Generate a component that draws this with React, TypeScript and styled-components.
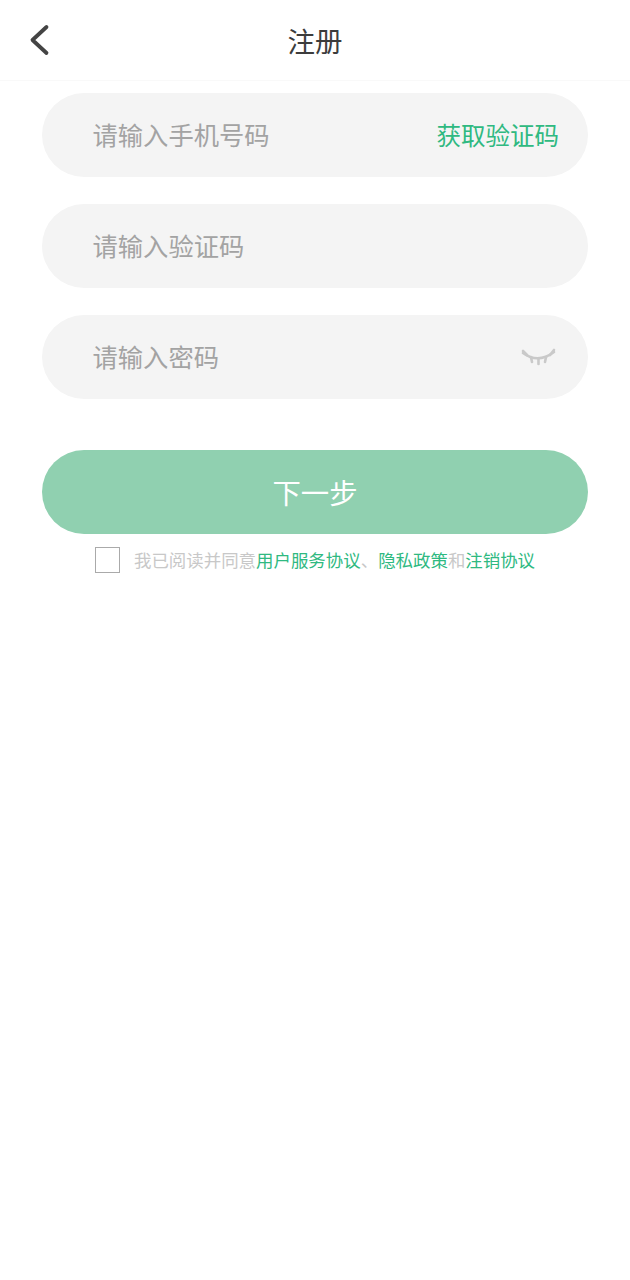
import React from 'react';
import styled, {createGlobalStyle} from 'styled-components';

const GlobalStyle = createGlobalStyle`
  html, body {
    margin: 0;
    padding: 0;
    background: #ffffff;
    font-family: "Noto Sans CJK SC", "Noto Sans", sans-serif;
  }
`;

const Page = styled.div`
  width: 630px;
  height: 1280px;
  display: flex;
  flex-direction: column;
  background: #ffffff;
`;

const Header = styled.header`
  position: relative;
  height: 81px;
  box-sizing: border-box;
  display: flex;
  align-items: center;
  justify-content: center;
  border-bottom: 1px solid #f9f9f9;
`;

const BackButton = styled.button`
  position: absolute;
  left: 28px;
  top: 24px;
  width: 24px;
  height: 32px;
  padding: 0;
  border: none;
  background: none;
`;

const Title = styled.h1`
  margin: 0;
  font-size: 27.5px;
  font-weight: 400;
  color: #3c3c3c;
`;

const Form = styled.div`
  display: flex;
  flex-direction: column;
  padding: 12px 42px 0;
`;

const Field = styled.div`
  height: 84px;
  box-sizing: border-box;
  margin-bottom: 27px;
  padding: 0 29px 2px 50.5px;
  display: flex;
  align-items: center;
  justify-content: space-between;
  background: #f4f4f4;
  border-radius: 42px;
`;

const Placeholder = styled.span`
  font-size: 25.3px;
  color: #a3a3a3;
`;

const CodeLink = styled.span`
  font-size: 24.5px;
  color: #2fb981;
`;

const EyeIcon = styled.svg`
  width: 36px;
  height: 20px;
  margin: 2px 3px 0 0;
`;

const NextButton = styled.button`
  height: 84px;
  margin-top: 24px;
  padding: 0 0 2px;
  border: none;
  border-radius: 42px;
  background: #90d0b0;
  color: #ffffff;
  font-family: inherit;
  font-size: 28.4px;
`;

const Agreement = styled.div`
  display: flex;
  align-items: flex-start;
  margin-top: 12px;
  padding-left: 53px;
`;

const CheckBox = styled.span`
  width: 25px;
  height: 26px;
  margin-top: 1px;
  box-sizing: border-box;
  border: 1px solid #aaaaaa;
  background: #ffffff;
`;

const AgreementText = styled.p`
  margin: 1px 0 0 14px;
  font-size: 17.45px;
  white-space: nowrap;
  color: #c8c8c8;
`;

const LinkText = styled.span`
  color: #2fb981;
`;

export default function App() {
  return (
    <Page>
      <GlobalStyle />
      <Header>
        <BackButton aria-label="返回">
          <svg width="24" height="32" viewBox="0 0 24 32" fill="none">
            <path d="M18.5 3 L4.5 16 L18.5 29" stroke="#444444" strokeWidth="3.8" strokeLinecap="round" strokeLinejoin="round" />
          </svg>
        </BackButton>
        <Title>注册</Title>
      </Header>
      <Form>
        <Field>
          <Placeholder>请输入手机号码</Placeholder>
          <CodeLink>获取验证码</CodeLink>
        </Field>
        <Field>
          <Placeholder>请输入验证码</Placeholder>
        </Field>
        <Field>
          <Placeholder>请输入密码</Placeholder>
          <EyeIcon viewBox="0 0 36 20" fill="none" stroke="#c9c9c9" strokeWidth="2.6" strokeLinecap="round">
            <path d="M3 6 Q18 17 34 5" />
            <path d="M3 4 L7 8" />
            <path d="M34 3 L30 8" />
            <path d="M11 10 L12 15" />
            <path d="M18.5 12 L18.5 17" />
            <path d="M26 10 L25 15" />
          </EyeIcon>
        </Field>
        <NextButton>下一步</NextButton>
        <Agreement>
          <CheckBox />
          <AgreementText>
            我已阅读并同意<LinkText>用户服务协议</LinkText>、<LinkText>隐私政策</LinkText>和<LinkText>注销协议</LinkText>
          </AgreementText>
        </Agreement>
      </Form>
    </Page>
  );
}
